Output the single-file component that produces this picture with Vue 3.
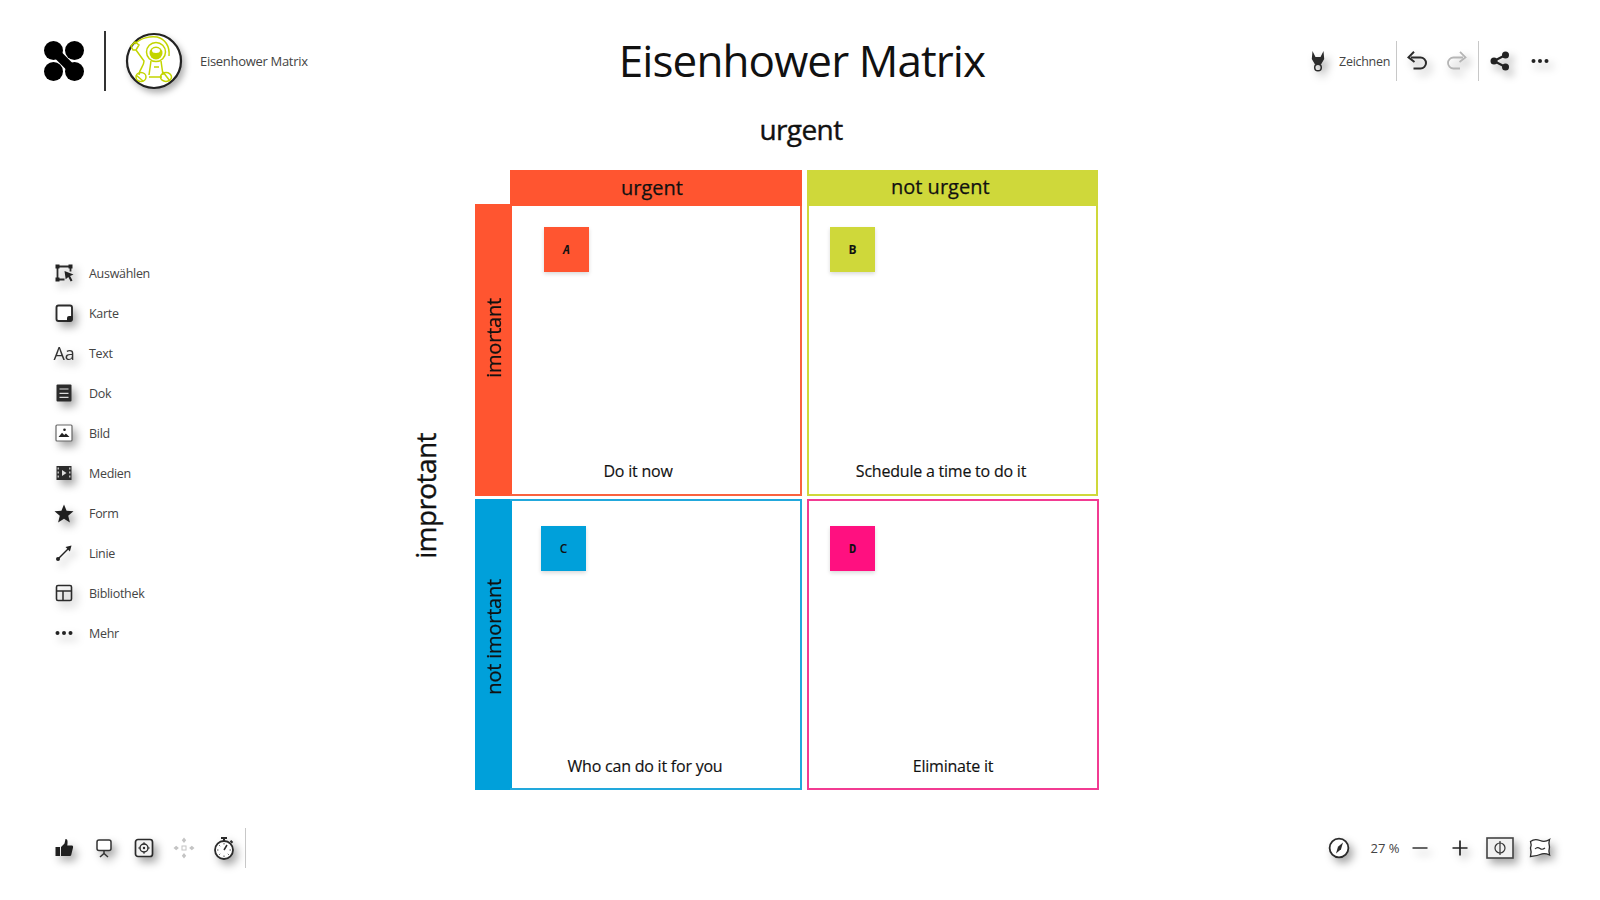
<script setup>
const tools = [
  {
    label: "Auswählen",
    icon: `<path d="M5.500 5.500h13M5.500 5.500v13M5.500 18.500h7M18.500 5.500v5" fill="none" stroke="#2b2b2b" stroke-width="1.800"/><path d="M3.500 3.500h4v4h-4zM16.500 3.500h4v4h-4zM3.500 16.500h4v4h-4z" fill="#222"/><path d="M12.500 10l9 3.500-3.400 1.500 2.400 4.500-1.800 1-2.400-4.500-2.600 2.200z" fill="#222"/>`,
  },
  {
    label: "Karte",
    icon: `<rect x="4.500" y="4.500" width="15.500" height="15.500" rx="2" fill="#fff" stroke="#2b2b2b" stroke-width="1.900"/><path d="M20.500 15v3.500a2 2 0 0 1-2 2H15v-3.500a2 2 0 0 1 2-2z" fill="#222"/>`,
  },
  {
    label: "Text",
    glyph: "Aa",
  },
  {
    label: "Dok",
    icon: `<rect x="4.500" y="3.500" width="15" height="17" rx="1" fill="#2b2b2b"/><path d="M7.500 8h9M7.500 12.300h9M7.500 16.300h9" stroke="#ddd" stroke-width="1.200"/>`,
  },
  {
    label: "Bild",
    icon: `<rect x="4" y="4" width="16" height="16" rx="1" fill="#fff" stroke="#666" stroke-width="1.200"/><circle cx="12.500" cy="8.800" r="1.300" fill="#222"/><path d="M6.500 16l3.500-4.200 2.200 2.200 1.700-1.600 3.600 3.600z" fill="#222"/>`,
  },
  {
    label: "Medien",
    icon: `<rect x="4.500" y="5" width="15" height="14" fill="#2b2b2b"/><path d="M5.500 6.500H7v2H5.500zM5.500 10.500H7v2H5.500zM5.500 14.500H7v2H5.500zM17 6.500h1.500v2H17zM17 10.500h1.500v2H17zM17 14.500h1.500v2H17z" fill="#bbb"/><path d="M10 9l4.500 3-4.500 3z" fill="#ddd"/>`,
  },
  {
    label: "Form",
    icon: `<path d="M12 3.500l2.600 6.300 6.900.5-5.300 4.400 1.700 6.700-5.900-3.600-5.900 3.600 1.700-6.700-5.300-4.400 6.900-.5z" fill="#1f1f1f"/>`,
  },
  {
    label: "Linie",
    icon: `<path d="M6.500 17.500L16 8" stroke="#222" stroke-width="1.500"/><circle cx="6" cy="18" r="2" fill="#222"/><path d="M19.500 4.500l-1.600 6-4.400-4.400z" fill="#222"/>`,
  },
  {
    label: "Bibliothek",
    icon: `<rect x="4.500" y="4.500" width="15" height="15" rx="1.500" fill="none" stroke="#2b2b2b" stroke-width="1.600"/><path d="M4.500 10h15M11 10v9.500" stroke="#2b2b2b" stroke-width="1.500"/>`,
  },
  {
    label: "Mehr",
    icon: `<circle cx="5.500" cy="12" r="2" fill="#222"/><circle cx="12" cy="12" r="2" fill="#222"/><circle cx="18.500" cy="12" r="2" fill="#222"/>`,
  },
];
</script>

<template>
  <div class="app">
    <!-- whiteboard content sits on a free canvas behind the toolbars -->
    <div class="board">
      <div class="axis axis-top">urgent</div>
      <div class="axis axis-left">improtant</div>

      <div class="head head-a">urgent</div>
      <div class="head head-b">not urgent</div>
      <div class="bar bar-a"><span>imortant</span></div>
      <div class="bar bar-c"><span>not imortant</span></div>

      <div class="cell cell-a"></div>
      <div class="cell cell-b"></div>
      <div class="cell cell-c"></div>
      <div class="cell cell-d"></div>

      <div class="note note-a">A</div>
      <div class="note note-b">B</div>
      <div class="note note-c">C</div>
      <div class="note note-d">D</div>

      <div class="hint hint-a">Do it now</div>
      <div class="hint hint-b">Schedule a time to do it</div>
      <div class="hint hint-c">Who can do it for you</div>
      <div class="hint hint-d">Eliminate it</div>
    </div>

    <header class="topbar">
      <div class="top-left">
        <svg class="logo" viewBox="0 0 40 40" width="40" height="40">
          <circle cx="9.500" cy="9.500" r="9.500" fill="#000" />
          <circle cx="30.500" cy="9.500" r="9.500" fill="#000" />
          <circle cx="9.500" cy="30.500" r="9.500" fill="#000" />
          <circle cx="30.500" cy="30.500" r="9.500" fill="#000" />
          <path d="M14 14 L26 26" stroke="#000" stroke-width="9" />
        </svg>
        <span class="logo-rule"></span>
        <svg class="avatar" viewBox="0 0 60 60" width="60" height="60">
          <circle cx="30" cy="30" r="27" fill="#fff" stroke="#222" stroke-width="2.200" />
          <g fill="none" stroke="#c3d500" stroke-width="1.500">
            <path d="M11 13 C16 7 26 5 33 6 C41 8 46 15 45 25" />
            <path d="M7 15 L11 11 L15 14 L12 19 L9 19 Z" />
            <path d="M12 19 L20 30 C20 36 15 38 15 44" />
            <circle cx="32" cy="21" r="9.500" />
            <path d="M27 30 L25 44 M37 30 L39 44 M25 46 H38 M30 36 H35" />
            <ellipse cx="17" cy="46" rx="5" ry="4.500" />
            <ellipse cx="42" cy="46" rx="5.500" ry="4.500" />
            <path d="M39 41 L46 50 M12 44 L19 50" />
          </g>
          <circle cx="32" cy="22" r="6.500" fill="#c3d500" />
          <ellipse cx="32" cy="19.500" rx="4" ry="2.500" fill="#fff" />
        </svg>
        <span class="doc-name">Eisenhower Matrix</span>
      </div>

      <h1 class="title">Eisenhower Matrix</h1>

      <div class="top-right">
        <button class="tool-draw">
          <svg class="ico" viewBox="0 0 24 24" width="24" height="24">
            <path d="M6.500 2l3 6h5l3-6 .7 8-3.200 5.500H9L5.800 10z" fill="#2b2b2b" />
            <circle cx="12" cy="18.500" r="3.300" fill="none" stroke="#2b2b2b" stroke-width="1.500" />
          </svg>
          <span>Zeichnen</span>
        </button>
        <span class="rule rule-draw"></span>
        <svg class="ico" viewBox="0 0 24 24" width="24" height="24">
          <path d="M6 8.500h9.500a5.500 5.500 0 0 1 0 11H8.500" fill="none" stroke="#2b2b2b" stroke-width="2" />
          <path d="M9 2.800L3.500 8.400l6 4.600" fill="none" stroke="#2b2b2b" stroke-width="2" />
        </svg>
        <svg class="ico redo" viewBox="0 0 24 24" width="24" height="24">
          <path d="M18 8.500H8.500a5.500 5.500 0 0 0 0 11H15" fill="none" stroke="#b5b5b5" stroke-width="1.800" />
          <path d="M15 2.800l5.500 5.600-6 4.600" fill="none" stroke="#b5b5b5" stroke-width="1.800" />
        </svg>
        <span class="rule rule-undo"></span>
        <svg class="ico" viewBox="0 0 24 24" width="24" height="24">
          <path d="M6 12L17.500 6M6 12L17.500 18" stroke="#222" stroke-width="2.200" />
          <circle cx="6" cy="12" r="3.500" fill="#222" />
          <circle cx="17.500" cy="6" r="3.500" fill="#222" />
          <circle cx="17.500" cy="18" r="3.500" fill="#222" />
        </svg>
        <svg class="ico more" viewBox="0 0 24 24" width="24" height="24">
          <circle cx="5.500" cy="12" r="2" fill="#222" />
          <circle cx="12" cy="12" r="2" fill="#222" />
          <circle cx="18.500" cy="12" r="2" fill="#222" />
        </svg>
      </div>
    </header>

    <nav class="sidebar">
      <div class="tool" v-for="t in tools" :key="t.label">
        <span v-if="t.glyph" class="ico aa">{{ t.glyph }}</span>
        <svg v-else class="ico" viewBox="0 0 24 24" width="24" height="24" v-html="t.icon"></svg>
        <span>{{ t.label }}</span>
      </div>
    </nav>

    <footer class="bottombar">
      <div class="bottom-left">
        <svg class="ico" viewBox="0 0 24 24" width="24" height="24">
          <path d="M3.500 11H8v9H3.500z" fill="#1f1f1f" />
          <path d="M9 11l3.500-3.500L13.500 3c2 0 2.500 2 1.800 6.500H20c1 0 1.300 1.200 1 2.200l-1.800 7.300c-.2.600-.7 1-1.200 1H9z" fill="#1f1f1f" />
        </svg>
        <svg class="ico" viewBox="0 0 24 24" width="24" height="24">
          <rect x="5" y="4" width="14" height="10.500" rx="2" fill="#fff" stroke="#333" stroke-width="1.500" />
          <path d="M12 15v3M8 21l4-3.500 4 3.500" fill="none" stroke="#333" stroke-width="1.500" />
        </svg>
        <svg class="ico" viewBox="0 0 24 24" width="24" height="24">
          <rect x="3.500" y="3.500" width="17" height="17" rx="2.500" fill="#f2f2f2" stroke="#2b2b2b" stroke-width="1.700" />
          <circle cx="12" cy="12" r="4" fill="none" stroke="#2b2b2b" stroke-width="1.400" />
          <circle cx="12" cy="12" r="1.200" fill="#2b2b2b" />
          <path d="M12 6.300v2M12 15.700v2M6.300 12h2M15.700 12h2" stroke="#2b2b2b" stroke-width="1.200" />
        </svg>
        <svg class="ico-flat" viewBox="0 0 24 24" width="24" height="24">
          <rect x="10" y="10" width="4" height="4" fill="none" stroke="#c4c4c4" stroke-width="1" />
          <path d="M12 1.500l2.200 2.700-2.200 2.700-2.200-2.700zM12 17.100l2.200 2.700-2.200 2.700-2.200-2.700zM1.500 12l2.700-2.200 2.700 2.200-2.700 2.200zM17.100 12l2.700-2.200 2.700 2.200-2.700 2.200z" fill="#c4c4c4" />
        </svg>
        <svg class="ico" viewBox="0 0 24 24" width="24" height="24">
          <circle cx="12" cy="14" r="9" fill="#fff" stroke="#2b2b2b" stroke-width="1.800" />
          <path d="M9 2h6M12 2v3M18.500 4.800l2 2" stroke="#2b2b2b" stroke-width="2" />
          <path d="M12 14l3-5" stroke="#2b2b2b" stroke-width="1.500" />
          <path d="M12 7v1.500M12 19.500V21M5 14h1.500M17.500 14H19M7.200 9.200l1 1M15.800 17.800l1 1M7.200 18.800l1-1" stroke="#555" stroke-width="1" />
        </svg>
        <span class="rule rule-time"></span>
      </div>

      <div class="bottom-right">
        <svg class="ico" viewBox="0 0 24 24" width="24" height="24">
          <circle cx="12" cy="12" r="9.400" fill="#fff" stroke="#2b2b2b" stroke-width="1.800" />
          <path d="M16 6.500l-2 6.700-5 4.300 2-6.700z" fill="#2b2b2b" />
        </svg>
        <span class="zoom-val">27 %</span>
        <svg class="ico" viewBox="0 0 24 24" width="24" height="24">
          <path d="M4.500 12h15" stroke="#333" stroke-width="1.500" />
        </svg>
        <svg class="ico" viewBox="0 0 24 24" width="24" height="24">
          <path d="M4.500 12h15M12 4.500v15" stroke="#222" stroke-width="1.700" />
        </svg>
        <svg class="ico fit" viewBox="0 0 28 24" width="28" height="24">
          <rect x="1" y="2" width="26" height="20" fill="#f1f1f1" stroke="#444" stroke-width="1.600" />
          <ellipse cx="14" cy="12" rx="5" ry="5" fill="none" stroke="#333" stroke-width="1.200" />
          <path d="M14 5v14" stroke="#333" stroke-width="1.200" />
        </svg>
        <svg class="ico" viewBox="0 0 24 24" width="24" height="24">
          <path d="M2.500 5.500C5 3.500 8.500 3 12 4.500s6.500 1 9.500-1c-.8 2.500-.8 5 0 7.500-.8 3-.8 5.500 0 8-3-1.500-6-2-9.500-.5S5 20 2.500 20.500c.8-3 .8-6 0-8.500.8-2.200.8-4.500 0-6.500z" fill="#fff" stroke="#2b2b2b" stroke-width="1.300" />
          <path d="M7 13c1.800-2 3-2 5-.5s3.200 1 5-.5" fill="none" stroke="#2b2b2b" stroke-width="1.100" />
        </svg>
      </div>
    </footer>
  </div>
</template>

<style>
html,
body {
  margin: 0;
  background: #fff;
}
</style>

<style scoped>
.app {
  position: relative;
  width: 1600px;
  height: 900px;
  overflow: hidden;
  display: flex;
  flex-direction: column;
  background: #fff;
  font-family: "Open Sans", "Noto Sans", sans-serif;
  color: #444;
}

.ico {
  flex: none;
  display: block;
  filter: drop-shadow(4px 5px 4px rgba(0, 0, 0, 0.35));
}

.ico-flat {
  flex: none;
  display: block;
}

.rule {
  display: block;
  flex: none;
  width: 1px;
  height: 40px;
  background: #c8c8c8;
}

/* top bar */
.topbar {
  position: relative;
  height: 122px;
  flex: none;
  display: flex;
  align-items: center;
  padding: 0 48px 0 44px;
}

.top-left {
  flex: 1;
  display: flex;
  align-items: center;
}

.logo-rule {
  width: 2px;
  height: 60px;
  background: #333;
  margin-left: 20px;
}

.avatar {
  margin-left: 18px;
  filter: drop-shadow(3px 4px 3px rgba(0, 0, 0, 0.3));
}

.doc-name {
  margin-left: 16px;
  font-size: 13px;
  letter-spacing: -0.3px;
}

.title {
  margin: 0 0 2px 8px;
  font-size: 44px;
  font-weight: 400;
  color: #111;
  letter-spacing: -0.9px;
  white-space: nowrap;
}

.top-right {
  flex: 1;
  display: flex;
  justify-content: flex-end;
  align-items: center;
}

.tool-draw {
  display: flex;
  align-items: center;
  gap: 9px;
  padding: 0;
  border: 0;
  background: none;
  font: inherit;
  font-size: 12.500px;
  letter-spacing: -0.3px;
  color: #444;
}

.rule-draw {
  margin: 0 8px 0 6px;
}

.redo {
  margin-left: 16px;
}

.rule-undo {
  margin: 0 9px;
}

.more {
  margin-left: 16px;
}

/* left tools */
.sidebar {
  flex: 1;
  display: flex;
  flex-direction: column;
  padding: 131px 0 0 52px;
}

.tool {
  height: 40px;
  display: flex;
  align-items: center;
  gap: 13px;
  font-size: 12.500px;
  letter-spacing: -0.3px;
}

.aa {
  width: 24px;
  text-align: center;
  font-size: 18px;
  color: #333;
}

/* bottom bar */
.bottombar {
  flex: none;
  height: 40px;
  display: flex;
  justify-content: space-between;
  align-items: center;
  padding: 0 48px 32px 52px;
}

.bottom-left,
.bottom-right {
  display: flex;
  align-items: center;
  gap: 16px;
}

.rule-time {
  margin-left: -7px;
}

.zoom-val {
  width: 36px;
  text-align: center;
  font-size: 13px;
  margin: 0 -11px 0 0;
}

.fit {
  margin: 0 -2px;
}

/* whiteboard */
.board {
  position: absolute;
  inset: 0;
  color: #111;
}

.axis {
  position: absolute;
  font-size: 28px;
  line-height: 38px;
  letter-spacing: -0.6px;
  -webkit-text-stroke: 0.4px #111;
  white-space: nowrap;
}

.axis-top {
  left: 701px;
  width: 200px;
  top: 110px;
  text-align: center;
}

.axis-left {
  left: 325px;
  top: 477px;
  width: 200px;
  text-align: center;
  transform: rotate(-90deg);
}

.head {
  position: absolute;
  top: 170px;
  height: 36px;
  line-height: 35px;
  font-size: 20px;
  -webkit-text-stroke: 0.25px #111;
  box-sizing: border-box;
}

.head-a {
  left: 510px;
  width: 292px;
  padding-left: 111px;
  background: #ff5530;
}

.head-b {
  left: 807px;
  width: 291px;
  padding-left: 84px;
  line-height: 34px;
  background: #cfd83a;
}

.bar {
  position: absolute;
  left: 475px;
  width: 37px;
  box-sizing: border-box;
  display: flex;
  align-items: center;
  justify-content: center;
}

.bar span {
  display: block;
  writing-mode: vertical-rl;
  transform: rotate(180deg);
  font-size: 20px;
  line-height: 30px;
  letter-spacing: -0.2px;
  -webkit-text-stroke: 0.25px #111;
  white-space: nowrap;
}

.bar-a {
  top: 204px;
  height: 292px;
  padding-bottom: 25px;
  background: #ff5530;
}

.bar-c {
  top: 499px;
  height: 291px;
  padding-bottom: 16px;
  background: #00a0da;
}

.cell {
  position: absolute;
  box-sizing: border-box;
  border: 2px solid;
}

.cell-a {
  left: 510px;
  top: 206px;
  width: 292px;
  height: 290px;
  border-color: #f9623f;
  border-left: 0;
  border-top: 0;
}

.cell-b {
  left: 807px;
  top: 206px;
  width: 291px;
  height: 290px;
  border-color: #cfd83a;
  border-top: 0;
}

.cell-c {
  left: 510px;
  top: 499px;
  width: 292px;
  height: 291px;
  border-color: #22a8dc;
  border-left: 0;
}

.cell-d {
  left: 807px;
  top: 499px;
  width: 292px;
  height: 291px;
  border-color: #f23b92;
}

.note {
  position: absolute;
  width: 45px;
  height: 45px;
  display: flex;
  align-items: center;
  justify-content: center;
  font-size: 12px;
  font-weight: 700;
  box-shadow: 0 2px 4px rgba(0, 0, 0, 0.15);
}

.note-a {
  left: 544px;
  top: 227px;
  background: #ff5530;
  font-family: "DejaVu Sans Mono", monospace;
  font-style: italic;
}

.note-b {
  left: 830px;
  top: 227px;
  background: #cfd83a;
}

.note-c {
  left: 541px;
  top: 526px;
  background: #00a0da;
  font-weight: 600;
}

.note-d {
  left: 830px;
  top: 526px;
  background: #ff1080;
  font-family: "DejaVu Sans Mono", monospace;
}

.hint {
  position: absolute;
  width: 292px;
  text-align: center;
  font-size: 16px;
  line-height: 22px;
  letter-spacing: -0.22px;
  -webkit-text-stroke: 0.15px #111;
  white-space: nowrap;
}

.hint-a {
  left: 492px;
  top: 460px;
}

.hint-b {
  left: 795px;
  top: 460px;
}

.hint-c {
  left: 499px;
  top: 755px;
}

.hint-d {
  left: 807px;
  top: 755px;
}
</style>
